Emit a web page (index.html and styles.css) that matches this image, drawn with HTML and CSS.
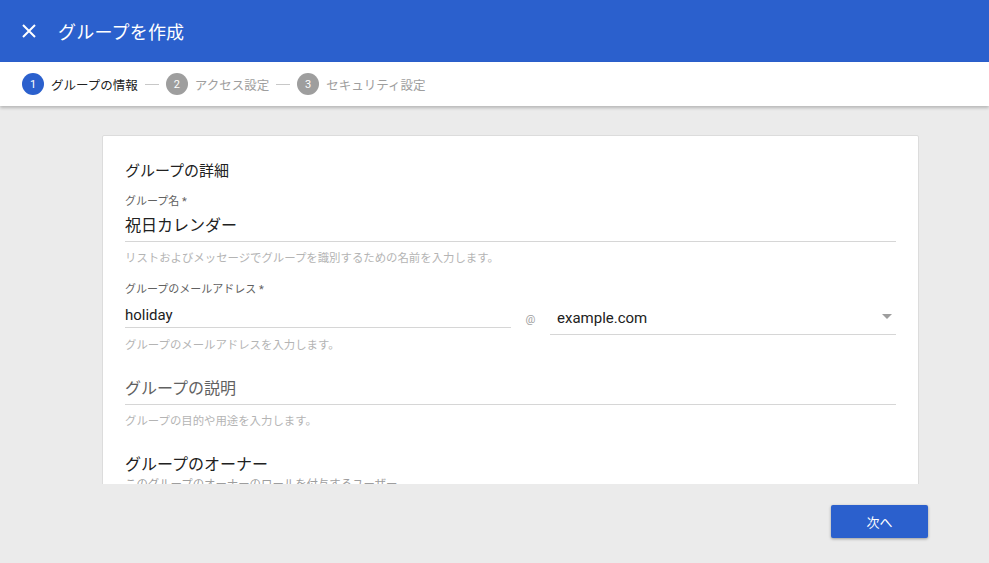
FILE: index.html
```
<!DOCTYPE html>
<html lang="ja">
<head>
<meta charset="utf-8">
<link rel="stylesheet" href="styles.css">
</head>
<body>
<div class="app">
  <header class="topbar">
    <svg class="close" width="14" height="14" viewBox="0 0 14 14"><path d="M1 1L13 13M13 1L1 13" stroke="#fff" stroke-width="2" fill="none"/></svg>
    <h1 class="title">グループを作成</h1>
  </header>
  <nav class="stepper">
    <div class="step active"><span class="num">1</span><span class="label">グループの情報</span></div>
    <span class="sep"></span>
    <div class="step"><span class="num">2</span><span class="label">アクセス設定</span></div>
    <span class="sep"></span>
    <div class="step"><span class="num">3</span><span class="label">セキュリティ設定</span></div>
  </nav>
  <main class="content">
    <section class="card">
      <h2 class="card-title">グループの詳細</h2>
      <div class="field">
        <div class="flabel">グループ名 *</div>
        <div class="fvalue">祝日カレンダー</div>
        <div class="fhelp">リストおよびメッセージでグループを識別するための名前を入力します。</div>
      </div>
      <div class="field email">
        <div class="flabel">グループのメールアドレス *</div>
        <div class="email-row">
          <div class="email-local">
            <div class="fvalue local">holiday</div>
          </div>
          <span class="at">@</span>
          <div class="domain">
            <span>example.com</span>
            <span class="caret"></span>
          </div>
        </div>
        <div class="fhelp">グループのメールアドレスを入力します。</div>
      </div>
      <div class="field desc">
        <div class="fvalue placeholder">グループの説明</div>
        <div class="fhelp">グループの目的や用途を入力します。</div>
      </div>
      <div class="owner">
        <div class="owner-title">グループのオーナー</div>
        <div class="owner-sub">このグループのオーナーのロールを付与するユーザー</div>
      </div>
    </section>
  </main>
  <footer class="footer">
    <button class="next">次へ</button>
  </footer>
</div>
</body>
</html>
```
FILE: styles.css
```
* { box-sizing: border-box; }
html, body { margin: 0; padding: 0; }
body {
  font-family: Roboto, "Noto Sans CJK JP", sans-serif;
  background: #ebebeb;
  color: #212121;
  width: 989px;
  height: 563px;
  overflow: hidden;
}
.app { display: flex; flex-direction: column; height: 563px; }
.topbar {
  height: 62px;
  background: #2b60cd;
  display: flex;
  align-items: center;
  padding-left: 22px;
  flex-shrink: 0;
}
.title {
  margin: 0 0 0 22px;
  font-size: 18px;
  font-weight: 400;
  color: #fff;
  letter-spacing: 0.2px;
}
.stepper {
  height: 44px;
  background: #fff;
  display: flex;
  align-items: center;
  padding-left: 22px;
  box-shadow: 0 2px 3px rgba(0,0,0,0.22);
  position: relative;
  z-index: 1;
  flex-shrink: 0;
}
.step { display: flex; align-items: center; }
.num {
  width: 22px; height: 22px; border-radius: 50%;
  background: #9e9e9e; color: #fff;
  font-size: 11px;
  display: flex; align-items: center; justify-content: center;
}
.step.active .num { background: #2b60cd; }
.label { margin-left: 7px; font-size: 12.5px; color: #9e9e9e; }
.step.active .label { color: #212121; }
.sep {
  width: 14px; height: 1px; background: #c8c8c8;
  margin: 0 7px;
}
.content {
  flex: 1;
  overflow: hidden;
  padding: 29px 70px 0 102px;
  min-height: 0;
}
.card {
  background: #fff;
  border: 1px solid #dcdcdc;
  border-radius: 2px;
  padding: 23px 22px 0 22px;
  height: 400px;
}
.card-title {
  margin: 0;
  font-size: 15px;
  font-weight: 400;
  color: #212121;
  line-height: 24px;
}
.field { margin-top: 12px; }
.flabel { font-size: 11px; color: #616161; line-height: 14px; }
.fvalue {
  font-size: 16px;
  color: #212121;
  line-height: 22px;
  padding: 6px 0 4px;
  border-bottom: 1px solid #d6d6d6;
}
.fhelp {
  font-size: 11.4px;
  color: #b4b4b4;
  line-height: 14px;
  margin-top: 9px;
}
.field.email { margin-top: 18px; }
.email-row { display: flex; align-items: flex-start; }
.email-local { width: 386px; }
.fvalue.local { font-size: 15px; padding: 7px 0 1px; }
.at {
  font-size: 11px;
  color: #9e9e9e;
  width: 39px;
  text-align: center;
  padding-top: 16px;
}
.domain {
  flex: 1;
  display: flex;
  align-items: center;
  justify-content: space-between;
  font-size: 15px;
  color: #212121;
  line-height: 22px;
  padding: 8px 4px 5px 7px;
  border-bottom: 1px solid #d6d6d6;
  margin-top: 2px;
}
.caret {
  width: 0; height: 0;
  border-left: 5px solid transparent;
  border-right: 5px solid transparent;
  border-top: 5px solid #9e9e9e;
  margin-top: -4px;
}
.field.email .fhelp { margin-top: 3px; }
.field.desc { margin-top: 20px; }
.fvalue.placeholder { color: #616161; }
.owner { margin-top: 26px; }
.owner-title { font-size: 16px; color: #212121; line-height: 22px; }
.owner-sub { font-size: 11.4px; color: #9e9e9e; line-height: 14px; margin-top: 1px; }
.footer {
  height: 79px;
  flex-shrink: 0;
  display: flex;
  justify-content: flex-end;
  align-items: flex-start;
  padding: 21px 61px 0 0;
}
.next {
  width: 97px; height: 33px;
  background: #2b60cd;
  color: #fff;
  border: none;
  border-radius: 2px;
  font-family: Roboto, "Noto Sans CJK JP", sans-serif;
  font-size: 13px;
  box-shadow: 0 1px 3px rgba(0,0,0,0.35);
}
```
